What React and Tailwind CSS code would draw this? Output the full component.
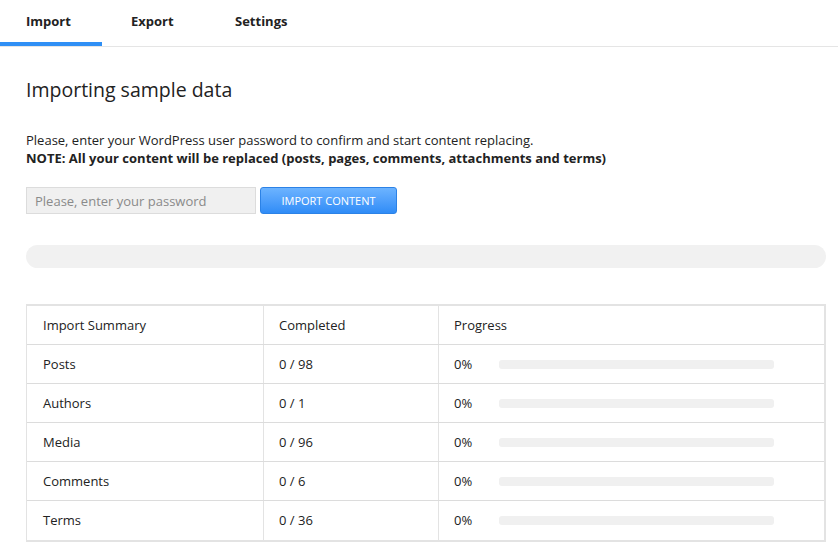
import React from 'react';

const rows = [
  { name: 'Posts', done: '0 / 98' },
  { name: 'Authors', done: '0 / 1' },
  { name: 'Media', done: '0 / 96' },
  { name: 'Comments', done: '0 / 6' },
  { name: 'Terms', done: '0 / 36' },
];

const App = () => {
  return (
    <div className="min-h-screen bg-white text-[#222] text-[13px]" style={{ fontFamily: '"Open Sans", sans-serif' }}>
      {/* Tabs */}
      <div className="flex border-b border-[#e5e5e5] h-[47px]">
        <div className="w-[102px] pl-[26px] pt-[12px] font-bold border-b-4 border-[#2f8ff5] -mb-px h-[46px]">Import</div>
        <div className="w-[104px] pl-[29px] pt-[12px] font-bold">Export</div>
        <div className="pl-[29px] pt-[12px] font-bold">Settings</div>
      </div>

      <div className="px-[26px] pr-[12px]">
        <h1 className="mt-[28px] text-[19.5px] text-[#222]">Importing sample data</h1>

        <p className="mt-[27px] leading-[18px]">Please, enter your WordPress user password to confirm and start content replacing.</p>
        <p className="font-bold leading-[18px]">NOTE: All your content will be replaced (posts, pages, comments, attachments and terms)</p>

        {/* Password form */}
        <div className="flex gap-[4px] mt-[20px]">
          <input
            type="password"
            placeholder="Please, enter your password"
            className="w-[230px] h-[27px] px-[8px] bg-[#f0f0f0] border border-[#dcdcdc] text-[13px] placeholder:text-[#8a8a8a] outline-none"
          />
          <button className="w-[137px] h-[27px] rounded-[3px] bg-gradient-to-b from-[#6cb3ff] to-[#2f8cf7] border border-[#2c82e6] text-white text-[11px] uppercase">
            Import content
          </button>
        </div>

        {/* Overall progress */}
        <div className="mt-[31px] h-[23px] rounded-full bg-[#f1f1f1]"></div>

        {/* Summary table */}
        <div className="mt-[36px] border-t-2 border-r-2 border-l border-b-2 border-[#e3e3e3]">
          <div className="grid grid-cols-[237px_175px_1fr] h-[39px] border-b border-[#dcdcdc] items-center">
            <div className="pl-[16px] h-full flex items-center border-r border-[#e3e3e3]">Import Summary</div>
            <div className="pl-[15px] h-full flex items-center border-r border-[#e3e3e3]">Completed</div>
            <div className="pl-[15px]">Progress</div>
          </div>
          {rows.map((r, i) => (
            <div
              key={r.name}
              className={`grid grid-cols-[237px_175px_1fr] h-[39px] items-center ${i < rows.length - 1 ? 'border-b border-[#dcdcdc]' : ''}`}
            >
              <div className="pl-[16px] h-full flex items-center border-r border-[#e3e3e3]">{r.name}</div>
              <div className="pl-[15px] h-full flex items-center border-r border-[#e3e3e3]">{r.done}</div>
              <div className="pl-[15px] flex items-center">
                <span className="w-[45px]">0%</span>
                <div className="w-[275px] h-[9px] rounded-[3px] bg-[#f0f0f0]"></div>
              </div>
            </div>
          ))}
        </div>
      </div>
    </div>
  );
};

export default App;
